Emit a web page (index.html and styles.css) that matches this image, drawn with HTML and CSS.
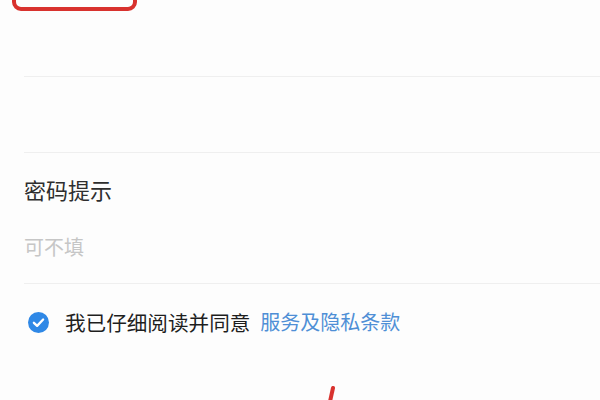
FILE: index.html
```html
<!DOCTYPE html>
<html lang="zh-CN">
<head>
<meta charset="utf-8">
<title>密码提示</title>
<link rel="stylesheet" href="styles.css">
</head>
<body>
<div class="page">
  <div class="form">
    <div class="field field-top"></div>
    <div class="field field-empty"></div>
    <div class="field field-hint">
      <div class="label">密码提示</div>
      <div class="placeholder">可不填</div>
    </div>
  </div>
  <div class="agree">
    <span class="check">
      <svg width="21" height="21" viewBox="0 0 20 20"><circle cx="10" cy="10" r="10" fill="#2f88e6"/><path d="M5.6 10.3 L8.7 13.2 L14.4 7.2" fill="none" stroke="#fff" stroke-width="2.2" stroke-linecap="round" stroke-linejoin="round"/></svg>
    </span>
    <span class="agree-text">我已仔细阅读并同意</span>
    <span class="agree-link">服务及隐私条款</span>
  </div>
  <div class="mark-box"></div>
  <svg class="mark-line" width="20" height="20" viewBox="0 0 20 20"><path d="M13 2 L9 20" stroke="#d8322e" stroke-width="4" stroke-linecap="round" fill="none"/></svg>
</div>
</body>
</html>
```

FILE: styles.css
```css
html, body {
  margin: 0;
  padding: 0;
  background: #fdfdfd;
}
body {
  font-family: "Noto Sans CJK SC", "Noto Sans", sans-serif;
  width: 600px;
  height: 400px;
  overflow: hidden;
}
.page {
  position: relative;
  width: 600px;
  height: 400px;
}
.form {
  padding-left: 24px;
}
.field {
  border-bottom: 1px solid #efefef;
}
.field-top {
  height: 76px;
}
.field-empty {
  height: 75px;
}
.field-hint {
  padding-top: 22px;
  box-sizing: border-box;
  height: 131px;
}
.label {
  font-size: 22px;
  line-height: 28px;
  color: #2e2e2e;
}
.placeholder {
  margin-top: 30px;
  font-size: 20px;
  line-height: 28px;
  color: #c6c6c6;
}
.agree {
  display: flex;
  align-items: center;
  padding-top: 24px;
  padding-left: 28px;
}
.check {
  display: flex;
  width: 21px;
  height: 21px;
  margin-right: 16px;
}
.agree-text {
  font-size: 20.6px;
  line-height: 28px;
  color: #1e1e1e;
}
.agree-link {
  font-size: 20px;
  line-height: 28px;
  color: #4f8fd6;
  margin-left: 10px;
}
.mark-box {
  position: absolute;
  left: 12px;
  top: -40px;
  width: 117px;
  height: 43px;
  border: 4px solid #d8322e;
  border-radius: 9px;
}
.mark-line {
  position: absolute;
  left: 320px;
  top: 386px;
}
```
